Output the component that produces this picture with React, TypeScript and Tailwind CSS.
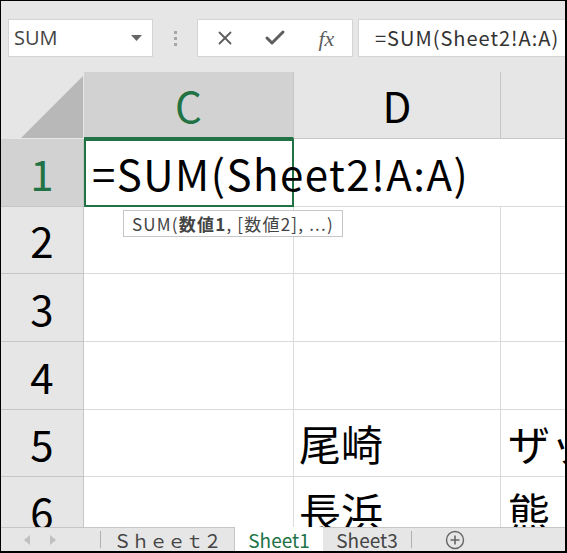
import { X, Check } from "lucide-react";

const CELL_FONT = { fontFamily: '"Noto Sans CJK JP", "Noto Sans", sans-serif' };

const ROWS = [
  { n: 1, h: "h-[68px]", d: "", e: "" },
  { n: 2, h: "h-[67px]", d: "", e: "" },
  { n: 3, h: "h-[68px]", d: "", e: "" },
  { n: 4, h: "h-[68px]", d: "", e: "" },
  { n: 5, h: "h-[67px]", d: "尾崎", e: "ザック" },
  { n: 6, h: "h-[68px]", d: "長浜", e: "熊" },
];

function Toolbar() {
  return (
    <div className="flex h-[70px] shrink-0 items-start bg-[#e6e6e6] pt-[18px]">
      {/* Name box */}
      <div className="ml-[7px] flex h-[38px] w-[145px] items-center justify-between border border-[#d4d4d4] bg-white pl-[5px] pr-[10px]">
        <span className="text-[20px] text-[#444]" style={{ fontFamily: '"Open Sans", sans-serif' }}>
          SUM
        </span>
        <svg width="11" height="6" viewBox="0 0 11 6">
          <path d="M0 0h11L5.5 6z" fill="#666" />
        </svg>
      </div>
      {/* Grip dots */}
      <div className="ml-[21px] mt-[12px] flex flex-col gap-[3px]">
        <span className="h-[3px] w-[3px] bg-[#a6a6a6]" />
        <span className="h-[3px] w-[3px] bg-[#a6a6a6]" />
        <span className="h-[3px] w-[3px] bg-[#a6a6a6]" />
      </div>
      {/* Cancel / enter / fx */}
      <div className="ml-[20px] flex h-[38px] w-[156px] items-center border border-[#d4d4d4] bg-white">
        <div className="flex w-[52px] justify-center pl-[2px]">
          <X size={22} strokeWidth={2} color="#5e5e5e" />
        </div>
        <div className="flex w-[52px] justify-center">
          <Check size={24} strokeWidth={3} color="#5e5e5e" />
        </div>
        <div className="flex w-[52px] justify-center">
          <span className="text-[22px] italic text-[#5e5e5e]" style={{ fontFamily: '"Liberation Serif", serif' }}>
            fx
          </span>
        </div>
      </div>
      {/* Formula bar */}
      <div className="ml-[5px] flex h-[38px] flex-1 items-center border border-r-0 border-[#d4d4d4] bg-white pl-[16px]">
        <span className="whitespace-nowrap text-[20px] tracking-[1px] text-[#333]" style={CELL_FONT}>
          =SUM(Sheet2!A:A)
        </span>
      </div>
    </div>
  );
}

function Grid() {
  return (
    <div className="relative flex-1 overflow-hidden bg-white" style={CELL_FONT}>
      {/* Header row */}
      <div className="flex h-[68px] bg-[#e6e6e6]">
        <div className="flex w-[83px] shrink-0 items-end justify-end pb-[1px] pr-[1px]">
          <svg width="64" height="64" viewBox="0 0 64 64">
            <path d="M64 2V64H2z" fill="#b8b8b8" />
          </svg>
        </div>
        <div className="mt-[1px] flex w-[210px] shrink-0 items-center justify-center border-b-2 border-r border-b-[#217346] border-r-[#c6c6c6] bg-[#d2d2d2] text-[42px] leading-none text-[#217346]">
          C
        </div>
        <div className="mt-[1px] flex w-[207px] shrink-0 items-center justify-center border-b border-r border-[#c6c6c6] text-[42px] leading-none text-black">
          D
        </div>
        <div className="mt-[1px] flex-1 border-b border-[#c6c6c6]" />
      </div>

      {ROWS.map((r) => (
        <div key={r.n} className={`flex ${r.h}`}>
          <div
            className={`flex w-[83px] shrink-0 items-center justify-center border-b border-r border-[#c6c6c6] text-[42px] leading-none ${
              r.n === 1 ? "bg-[#d2d2d2] text-[#217346]" : "bg-[#e6e6e6] text-black"
            }`}
          >
            {r.n}
          </div>
          {r.n === 1 ? (
            <div className="relative z-10 flex w-[210px] shrink-0 items-center border-2 border-[#217346] pl-[6px]">
              <span className="whitespace-nowrap text-[42px] leading-none tracking-[1.5px] text-black">
                =SUM(Sheet2!A:A)
              </span>
            </div>
          ) : (
            <div className="w-[210px] shrink-0 border-b border-r border-[#dadada]" />
          )}
          <div
            className={`flex w-[207px] shrink-0 items-center pl-[5px] text-[42px] leading-none text-black ${
              r.n === 1 ? "border-b border-[#dadada]" : "border-b border-r border-[#dadada]"
            }`}
          >
            {r.d}
          </div>
          <div className="flex flex-1 items-center overflow-hidden whitespace-nowrap border-b border-[#dadada] pl-[7px] text-[42px] leading-none text-black">
            {r.e}
          </div>
        </div>
      ))}

      {/* Function argument tooltip */}
      <div className="absolute left-[122px] top-[139px] z-20 flex h-[27px] items-center border border-[#c6c6c6] bg-white px-[8px] text-[17px] tracking-[1.2px] text-[#444]">
        <span className="whitespace-nowrap">
          SUM(<b className="font-bold">数値1</b>, [数値2], ...)
        </span>
      </div>
    </div>
  );
}

function SheetTabs() {
  return (
    <div
      className="flex h-[24px] shrink-0 items-stretch border-t border-[#c6c6c6] bg-[#e6e6e6] text-[18px] leading-none"
      style={CELL_FONT}
    >
      <div className="flex w-[99px] items-center gap-[20px] pl-[23px]">
        <svg width="6" height="10" viewBox="0 0 6 10">
          <path d="M6 0v10L0 5z" fill="#c0c0c0" />
        </svg>
        <svg width="6" height="10" viewBox="0 0 6 10">
          <path d="M0 0v10l6-5z" fill="#c0c0c0" />
        </svg>
      </div>
      <div className="my-[3px] w-px bg-[#b0b0b0]" />
      <div className="flex w-[134px] items-center justify-center border-r border-[#c6c6c6] text-[#444]">
        Ｓｈｅｅｔ２
      </div>
      <div className="-mt-px flex w-[88px] items-center justify-center bg-white text-[19px] text-[#217346]">Sheet1</div>
      <div className="flex w-[88px] items-center justify-center text-[19px] text-[#444]">Sheet3</div>
      <div className="my-[3px] w-px bg-[#b0b0b0]" />
      <div className="flex flex-1 items-center pl-[33px]">
        <svg width="20" height="20" viewBox="0 0 20 20">
          <circle cx="10" cy="10" r="8.5" fill="none" stroke="#666" strokeWidth="1.4" />
          <path d="M10 5.5v9M5.5 10h9" stroke="#666" strokeWidth="1.6" />
        </svg>
      </div>
    </div>
  );
}

export default function App() {
  return (
    <div className="h-[553px] w-[567px] bg-black pb-[2px] pl-px pr-[2px] pt-px">
      <div className="flex h-full w-full flex-col overflow-hidden">
        <Toolbar />
        <Grid />
        <SheetTabs />
      </div>
    </div>
  );
}
